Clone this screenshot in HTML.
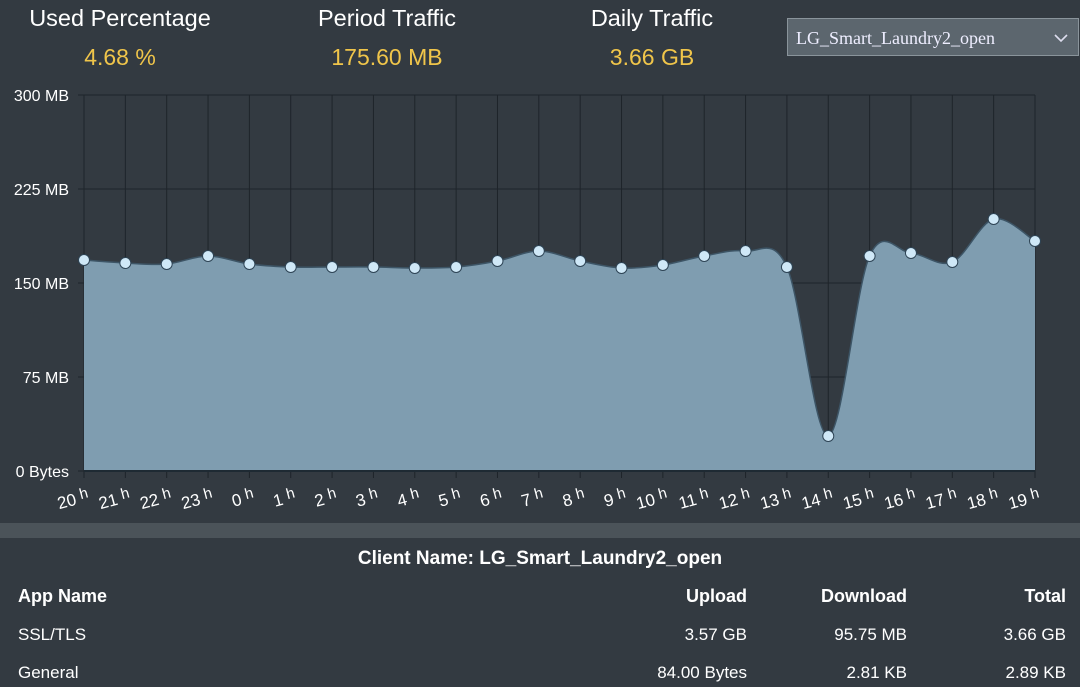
<!DOCTYPE html>
<html><head><meta charset="utf-8"><style>
body{margin:0;width:1080px;height:687px;background:#333a41;font-family:"Liberation Sans",sans-serif;overflow:hidden;position:relative;color:#fff}
.t{position:absolute;font-size:23.5px;text-align:center;width:240px}
.v{position:absolute;font-size:23px;color:#f0c54a;text-align:center;width:240px}
.sel{position:absolute;left:787px;top:18px;width:292px;height:38px;background:#5c666e;border:1px solid #8a949b;box-sizing:border-box;font-family:"Liberation Serif",serif;font-size:18px;line-height:38px;padding-left:8px;color:#eef}
.bar{position:absolute;left:0;top:523px;width:1080px;height:15px;background:#4b5359}
.r{position:absolute;font-size:18px}
.b{font-weight:bold}
</style></head><body>
<div class="t" style="left:0;top:5px">Used Percentage</div>
<div class="v" style="left:0;top:44px">4.68 %</div>
<div class="t" style="left:267px;top:5px">Period Traffic</div>
<div class="v" style="left:267px;top:44px">175.60 MB</div>
<div class="t" style="left:532px;top:5px">Daily Traffic</div>
<div class="v" style="left:532px;top:44px">3.66 GB</div>
<div class="sel">LG_Smart_Laundry2_open<svg style="position:absolute;right:10px;top:14px" width="14" height="10"><path d="M1 2 L7 8 L13 2" stroke="#dde" stroke-width="1.6" fill="none"/></svg></div>
<svg id="ch" width="1080" height="520" style="position:absolute;left:0;top:0" font-family="Liberation Sans, sans-serif"></svg>
<div class="bar"></div>
<div class="r b" style="left:0;width:1080px;text-align:center;top:548px;font-size:19px">Client Name: LG_Smart_Laundry2_open</div>
<div class="r b" style="left:18px;top:586px">App Name</div>
<div class="r b" style="right:333px;top:586px">Upload</div>
<div class="r b" style="right:173px;top:586px">Download</div>
<div class="r b" style="right:14px;top:586px">Total</div>
<div class="r" style="left:18px;top:625px;font-size:17px">SSL/TLS</div>
<div class="r" style="right:333px;top:625px;font-size:17px">3.57 GB</div>
<div class="r" style="right:173px;top:625px;font-size:17px">95.75 MB</div>
<div class="r" style="right:14px;top:625px;font-size:17px">3.66 GB</div>
<div class="r" style="left:18px;top:663px;font-size:17px">General</div>
<div class="r" style="right:333px;top:663px;font-size:17px">84.00 Bytes</div>
<div class="r" style="right:173px;top:663px;font-size:17px">2.81 KB</div>
<div class="r" style="right:14px;top:663px;font-size:17px">2.89 KB</div>
<script>
var ys=[260,263,264,256,264,267,267,267,268,267,261,251,261,268,265,256,251,267,436,256,253,262,219,241];
var lab=["20","21","22","23","0","1","2","3","4","5","6","7","8","9","10","11","12","13","14","15","16","17","18","19"];
var s="",x0=84,dx=(1035-84)/23;
[95,189,283,377,471].forEach(function(y,i){s+='<line x1="78" y1="'+y+'" x2="1035" y2="'+y+'" stroke="#1e242a" stroke-width="1"/>';
s+='<text x="69" y="'+(y+6)+'" fill="#fff" font-size="16" text-anchor="end">'+["300 MB","225 MB","150 MB","75 MB","0 Bytes"][i]+'</text>';});
for(var i=0;i<24;i++){var x=x0+i*dx;s+='<line x1="'+x+'" y1="95" x2="'+x+'" y2="478" stroke="#1e242a"/>';}
var P=ys.map(function(y,i){return [x0+i*dx,y]});
var d="M"+P[0][0]+","+P[0][1];
for(i=0;i<23;i++){var p0=P[Math.max(i-1,0)],p1=P[i],p2=P[i+1],p3=P[Math.min(i+2,23)];
d+=" C"+(p1[0]+(p2[0]-p0[0])/6)+","+(p1[1]+(p2[1]-p0[1])/6)+" "+(p2[0]-(p3[0]-p1[0])/6)+","+(p2[1]-(p3[1]-p1[1])/6)+" "+p2[0]+","+p2[1];}
s+='<path d="'+d+' L1035,471 L84,471 Z" fill="#7f9db0"/>';
s+='<path d="'+d+'" fill="none" stroke="#3d5566" stroke-width="1.5"/>';
s+='<line x1="84" y1="471" x2="1035" y2="471" stroke="#1e2a33" stroke-width="2"/>';
P.forEach(function(p){s+='<circle cx="'+p[0]+'" cy="'+p[1]+'" r="5.5" fill="#cfe8f7" stroke="#2e4455" stroke-width="1"/>';});
P.forEach(function(p,i){s+='<text transform="translate('+(p[0]+6)+',501) rotate(-15)" fill="#fff" font-size="17" text-anchor="end">'+lab[i]+' <tspan font-size="15" dy="-4">h</tspan></text>';});
document.getElementById("ch").innerHTML=s;
</script>
</body></html>
